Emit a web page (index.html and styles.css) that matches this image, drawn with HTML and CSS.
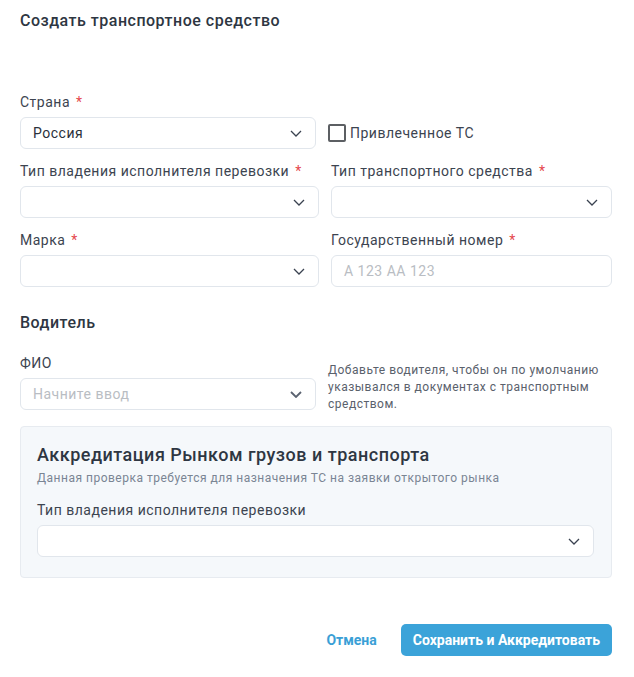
FILE: index.html
```html
<!DOCTYPE html>
<html>

<head>
    <title>Создать транспортное средство</title>
    <link rel="stylesheet" href="styles.css">
</head>

<body>
    <h1 class="title">Создать транспортное средство</h1>

    <div class="row row-first">
        <div class="field">
            <label>Страна <span class="req">*</span></label>
            <div class="select">
                <span class="value">Россия</span>
                <svg class="chevron" width="12" height="7" viewBox="0 0 12 7"><path d="M1 1l5 5 5-5" fill="none" stroke="#3a4250" stroke-width="1.3"/></svg>
            </div>
        </div>
        <div class="check">
            <span class="box"></span>
            <span>Привлеченное ТС</span>
        </div>
    </div>

    <div class="row">
        <div class="field">
            <label>Тип владения исполнителя перевозки <span class="req">*</span></label>
            <div class="select">
                <span class="value"></span>
                <svg class="chevron" width="12" height="7" viewBox="0 0 12 7"><path d="M1 1l5 5 5-5" fill="none" stroke="#3a4250" stroke-width="1.3"/></svg>
            </div>
        </div>
        <div class="field">
            <label>Тип транспортного средства <span class="req">*</span></label>
            <div class="select">
                <span class="value"></span>
                <svg class="chevron" width="12" height="7" viewBox="0 0 12 7"><path d="M1 1l5 5 5-5" fill="none" stroke="#3a4250" stroke-width="1.3"/></svg>
            </div>
        </div>
    </div>

    <div class="row">
        <div class="field">
            <label>Марка <span class="req">*</span></label>
            <div class="select">
                <span class="value"></span>
                <svg class="chevron" width="12" height="7" viewBox="0 0 12 7"><path d="M1 1l5 5 5-5" fill="none" stroke="#3a4250" stroke-width="1.3"/></svg>
            </div>
        </div>
        <div class="field">
            <label>Государственный номер <span class="req">*</span></label>
            <div class="select">
                <span class="placeholder">А 123 АА 123</span>
            </div>
        </div>
    </div>

    <h2 class="section">Водитель</h2>

    <div class="row row-first">
        <div class="field">
            <label>ФИО</label>
            <div class="select">
                <span class="placeholder">Начните ввод</span>
                <svg class="chevron" width="12" height="7" viewBox="0 0 12 7"><path d="M1 1l5 5 5-5" fill="none" stroke="#5a6270" stroke-width="1.8"/></svg>
            </div>
        </div>
        <p class="hint">Добавьте водителя, чтобы он по умолчанию указывался в документах с транспортным средством.</p>
    </div>

    <div class="accreditation">
        <h3>Аккредитация Рынком грузов и транспорта</h3>
        <p class="sub">Данная проверка требуется для назначения ТС на заявки открытого рынка</p>
        <label>Тип владения исполнителя перевозки</label>
        <div class="select">
            <span class="value"></span>
            <svg class="chevron" width="12" height="7" viewBox="0 0 12 7"><path d="M1 1l5 5 5-5" fill="none" stroke="#3a4250" stroke-width="1.3"/></svg>
        </div>
    </div>

    <div class="footer">
        <button type="button" class="cancel">Отмена</button>
        <button type="button" class="save">Сохранить и Аккредитовать</button>
    </div>
</body>

</html>
```

FILE: styles.css
```css
body {
    margin: 0;
    padding: 9px 22px 0 20px;
    font-family: Roboto, "Liberation Sans", sans-serif;
    font-size: 14px;
    letter-spacing: 0.5px;
    color: #3c4450;
    background-color: #fff;
}

.title {
    font-size: 16px;
    font-weight: 500;
    line-height: 24px;
    color: #2e3642;
    margin: 0 0 59px 0;
}

.row {
    display: grid;
    grid-template-columns: 299px 1fr;
    column-gap: 12px;
    margin-bottom: 12px;
}

.row-first {
    grid-template-columns: 296px 1fr;
}

.field {
    display: flex;
    flex-direction: column;
}

label {
    display: block;
    line-height: 20px;
    margin-bottom: 5px;
    color: #3c4450;
}

.req {
    color: #e5484d;
    margin-left: 2px;
}

.select {
    height: 32px;
    box-sizing: border-box;
    border: 1px solid #e1e6ec;
    border-radius: 6px;
    background-color: #fff;
    display: flex;
    align-items: center;
    justify-content: space-between;
    padding: 0 13px 0 12px;
}

.value {
    color: #2a313b;
}

.placeholder {
    color: #b9bdc3;
}

.chevron {
    flex-shrink: 0;
}

.check {
    align-self: end;
    height: 32px;
    display: flex;
    align-items: center;
    gap: 4px;
    color: #3c4450;
}

.check .box {
    width: 18px;
    height: 18px;
    box-sizing: border-box;
    border: 2px solid #5c5f63;
    border-radius: 2px;
}

.section {
    font-size: 16px;
    font-weight: 500;
    line-height: 24px;
    color: #2e3642;
    margin: 24px 0 18px 0;
}

.hint {
    margin: 0;
    padding-top: 9px;
    font-size: 12px;
    line-height: 17px;
    color: #5a616c;
}

.accreditation {
    margin-top: 13px;
    background-color: #f5f8fb;
    border: 1px solid #e7ebf0;
    border-radius: 4px;
    padding: 16px 17px 20px 16px;
}

.accreditation h3 {
    margin: 0;
    font-size: 18px;
    font-weight: 500;
    line-height: 24px;
    color: #2e3642;
}

.accreditation .sub {
    margin: 3px 0 14px 0;
    font-size: 12px;
    line-height: 16px;
    color: #7a8594;
}

.footer {
    display: flex;
    justify-content: flex-end;
    align-items: center;
    gap: 24px;
    margin-top: 46px;
}

button {
    font-family: Roboto, "Liberation Sans", sans-serif;
    font-size: 14px;
    font-weight: bold;
    letter-spacing: 0;
    border: none;
    cursor: pointer;
}

.cancel {
    background: none;
    color: #3a9fd6;
    padding: 0;
}

.save {
    background-color: #3ba3d9;
    color: #fff;
    border-radius: 5px;
    height: 32px;
    padding: 0 12px;
}
```
